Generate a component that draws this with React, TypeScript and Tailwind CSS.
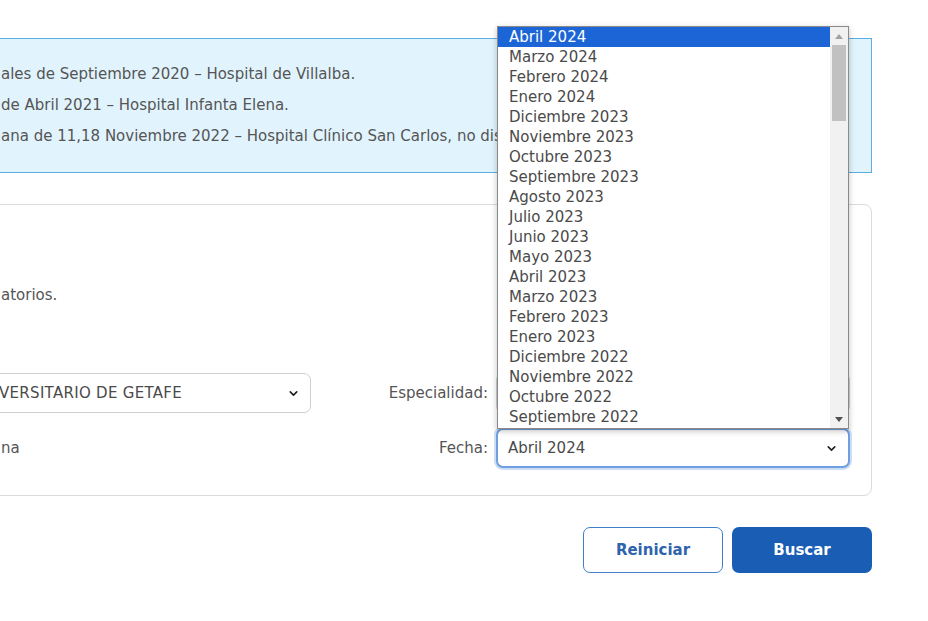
import { ChevronDown } from 'lucide-react';

const months = [
  'Abril 2024', 'Marzo 2024', 'Febrero 2024', 'Enero 2024', 'Diciembre 2023', 'Noviembre 2023',
  'Octubre 2023', 'Septiembre 2023', 'Agosto 2023', 'Julio 2023', 'Junio 2023', 'Mayo 2023',
  'Abril 2023', 'Marzo 2023', 'Febrero 2023', 'Enero 2023', 'Diciembre 2022', 'Noviembre 2022',
  'Octubre 2022', 'Septiembre 2022',
];

function FakeSelect({ children, focused = false, className = '' }: { children?: React.ReactNode; focused?: boolean; className?: string }) {
  return (
    <div
      className={`flex items-center justify-between h-[40px] rounded-[7px] bg-white pr-[10px] ${
        focused ? 'border-2 border-[#6f9fe0] shadow-[0_0_0_2px_rgba(111,159,224,0.35)] pl-[10px]' : 'border border-[#d0d0d0] pl-[11px]'
      } ${className}`}
    >
      <span className="whitespace-nowrap text-[15px] text-[#4a4a4a]">{children}</span>
      <ChevronDown className="w-[13px] h-[13px] text-[#222]" strokeWidth={3} />
    </div>
  );
}

export default function App() {
  return (
    <div className="relative w-[928px] h-[621px] overflow-hidden bg-white text-[#555] font-['DejaVu_Sans',sans-serif]">
      <div className="pt-[38px] pr-[56px]">
        <div className="ml-[-10px] h-[135px] border border-[#5aaee0] bg-[#e1f4fd] pl-[10px] pb-[1px] flex flex-col justify-center gap-[10px] text-[15px] leading-[21px] whitespace-nowrap overflow-hidden">
          <p>ales de Septiembre 2020 – Hospital de Villalba.</p>
          <p>de Abril 2021 – Hospital Infanta Elena.</p>
          <p className="max-w-[497px] overflow-hidden">ana de 11,18 Noviembre 2022 – Hospital Clínico San Carlos, no dis</p>
        </div>

        <div className="mt-[31px] ml-[-10px] h-[292px] rounded-r-[8px] border border-[#dcdcdc] pl-[10px] pr-[21px] pt-[80px]">
          <p className="text-[15px] leading-[20px]">atorios.</p>
          <div className="mt-[68px] flex items-center">
            <div className="w-[350px] ml-[-40px]">
              <FakeSelect className="pl-[37px] tracking-[0.3px]">VERSITARIO DE GETAFE</FakeSelect>
            </div>
            <span className="flex-1 text-right pr-[8px] text-[15px]">Especialidad:</span>
            <div className="w-[354px]">
              <FakeSelect />
            </div>
          </div>
          <div className="mt-[15px] flex items-center">
            <span className="text-[15px]">na</span>
            <span className="flex-1 text-right pr-[8px] text-[15px]">Fecha:</span>
            <div className="w-[354px]">
              <FakeSelect focused>Abril 2024</FakeSelect>
            </div>
          </div>
        </div>

        <div className="mt-[31px] flex justify-end gap-[9px]">
          <button className="w-[140px] h-[46px] rounded-[7px] border border-[#3f7fc9] bg-white text-[15px] font-semibold text-[#2f63ad]">
            Reiniciar
          </button>
          <button className="w-[140px] h-[46px] rounded-[7px] bg-[#1a5db4] text-[15px] font-semibold text-white">
            Buscar
          </button>
        </div>
      </div>

      <div className="absolute left-[497px] top-[26px] w-[352px] h-[403px] border border-[#8a8a8a] bg-white shadow-[0_2px_6px_rgba(0,0,0,0.25)] flex">
        <ul className="flex-1">
          {months.map((m, i) => (
            <li
              key={m}
              className={`h-[20px] leading-[20px] pl-[11px] text-[15px] ${i === 0 ? 'bg-[#1c65d6] text-white' : 'text-[#4a4a4a]'}`}
            >
              {m}
            </li>
          ))}
        </ul>
        <div className="w-[18px] bg-[#f1f1f1] flex flex-col items-center">
          <div className="h-[18px] flex items-center justify-center">
            <div className="w-0 h-0 border-x-[4px] border-x-transparent border-b-[5px] border-b-[#a3a3a3]" />
          </div>
          <div className="w-[14px] h-[76px] bg-[#c1c1c1]" />
          <div className="flex-1" />
          <div className="h-[18px] flex items-center justify-center">
            <div className="w-0 h-0 border-x-[4px] border-x-transparent border-t-[5px] border-t-[#505050]" />
          </div>
        </div>
      </div>
    </div>
  );
}
